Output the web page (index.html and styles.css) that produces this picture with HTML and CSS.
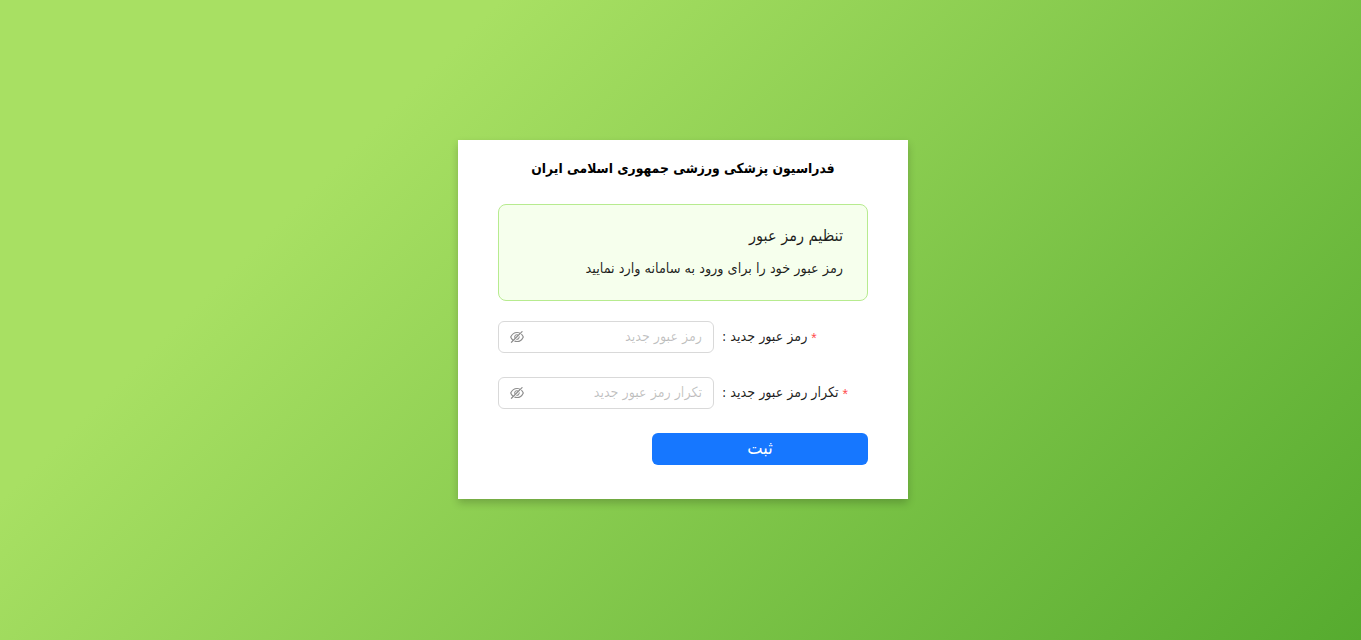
FILE: index.html
```html
<!DOCTYPE html>
<html lang="fa" dir="rtl">
<head>
<meta charset="utf-8">
<title>تنظیم رمز عبور</title>
<link rel="stylesheet" href="styles.css">
</head>
<body>
<main class="page">
  <section class="card">
    <h1 class="title">فدراسیون پزشکی ورزشی جمهوری اسلامی ایران</h1>
    <div class="alert">
      <div class="alert-title">تنظیم رمز عبور</div>
      <div class="alert-text">رمز عبور خود را برای ورود به سامانه وارد نمایید</div>
    </div>
    <form class="form">
      <div class="row">
        <label class="label"><span class="star">*</span>رمز عبور جدید :</label>
        <div class="input">
          <span class="placeholder">رمز عبور جدید</span>
          <svg class="eye" viewBox="64 64 896 896" fill="currentColor" aria-hidden="true"><path d="M942.2 486.2Q889.47 375.11 816.7 305l-50.88 50.88C807.31 395.53 843.45 447.4 874.7 512 791.5 684.2 673.4 766 512 766q-72.67 0-133.87-22.38L323 798.75Q408 838 512 838q288.3 0 430.2-300.3a60.29 60.29 0 000-51.5zm-63.57-320.64L836 122.88a8 8 0 00-11.32 0L715.31 232.2Q624.86 186 512 186q-288.3 0-430.2 300.3a60.3 60.3 0 000 51.5q56.69 119.4 136.5 191.41L112.48 835a8 8 0 000 11.31L155.17 889a8 8 0 0011.31 0l712.15-712.12a8 8 0 000-11.32zM149.3 512C232.6 339.8 350.7 258 512 258c54.54 0 104.13 9.36 149.12 28.39l-70.3 70.3a176 176 0 00-238.13 238.13l-83.42 83.42C223.1 637.49 183.3 582.28 149.3 512zm246.7 0a112.11 112.11 0 01146.2-106.69L401.31 546.2A112 112 0 01396 512z"/><path d="M508 624c-3.46 0-6.87-.16-10.25-.47l-52.82 52.82a176.09 176.09 0 00227.42-227.42l-52.82 52.82c.31 3.38.47 6.79.47 10.25a111.94 111.94 0 01-112 112z"/></svg>
        </div>
      </div>
      <div class="row">
        <label class="label"><span class="star">*</span>تکرار رمز عبور جدید :</label>
        <div class="input">
          <span class="placeholder">تکرار رمز عبور جدید</span>
          <svg class="eye" viewBox="64 64 896 896" fill="currentColor" aria-hidden="true"><path d="M942.2 486.2Q889.47 375.11 816.7 305l-50.88 50.88C807.31 395.53 843.45 447.4 874.7 512 791.5 684.2 673.4 766 512 766q-72.67 0-133.87-22.38L323 798.75Q408 838 512 838q288.3 0 430.2-300.3a60.29 60.29 0 000-51.5zm-63.57-320.64L836 122.88a8 8 0 00-11.32 0L715.31 232.2Q624.86 186 512 186q-288.3 0-430.2 300.3a60.3 60.3 0 000 51.5q56.69 119.4 136.5 191.41L112.48 835a8 8 0 000 11.31L155.17 889a8 8 0 0011.31 0l712.15-712.12a8 8 0 000-11.32zM149.3 512C232.6 339.8 350.7 258 512 258c54.54 0 104.13 9.36 149.12 28.39l-70.3 70.3a176 176 0 00-238.13 238.13l-83.42 83.42C223.1 637.49 183.3 582.28 149.3 512zm246.7 0a112.11 112.11 0 01146.2-106.69L401.31 546.2A112 112 0 01396 512z"/><path d="M508 624c-3.46 0-6.87-.16-10.25-.47l-52.82 52.82a176.09 176.09 0 00227.42-227.42l-52.82 52.82c.31 3.38.47 6.79.47 10.25a111.94 111.94 0 01-112 112z"/></svg>
        </div>
      </div>
      <div class="row actions">
        <button type="button" class="submit">ثبت</button>
      </div>
    </form>
  </section>
</main>
</body>
</html>
```
FILE: styles.css
```css
* { box-sizing: border-box; }
html, body { margin: 0; height: 100%; }
body {
  font-family: "DejaVu Sans Condensed", "DejaVu Sans", sans-serif;
  font-stretch: condensed;
  font-size: 14.3px;
  color: rgba(0, 0, 0, 0.88);
}
.page {
  height: 640px;
  display: flex;
  align-items: center;
  justify-content: center;
  padding: 0 0 1px 5px;
  background: linear-gradient(135deg, #a8e063 25%, #56ab2f 100%);
}
.card {
  width: 450px;
  height: 359px;
  padding: 16px 40px 0;
  background: #fff;
  box-shadow: 0 4px 8px rgba(0, 0, 0, 0.2);
}
.title {
  margin: 0 0 28px;
  font-size: 13.75px;
  line-height: 25px;
  font-weight: 700;
  text-align: center;
  color: #000;
  height: 20px;
}
.alert {
  height: 97px;
  padding: 19px 24px 0;
  background: #f6ffed;
  border: 1px solid #b7eb8f;
  border-radius: 8px;
}
.alert-title {
  font-size: 16.15px;
  line-height: 24px;
  margin-bottom: 9px;
}
.alert-text { line-height: 22px; }
.form {
  margin-top: 20px;
  display: flex;
  flex-direction: column;
  gap: 24px;
}
.row {
  display: grid;
  grid-template-columns: 154px 216px;
  align-items: center;
  height: 32px;
}
.label {
  padding: 0 0 0 8px;
  font-size: 14.15px;
  text-align: left;
  white-space: nowrap;
}
.star {
  margin-left: 4px;
  color: #ff4d4f;
  font-family: "Liberation Sans", sans-serif;
  font-size: 14px;
  vertical-align: -2px;
}
.input {
  height: 32px;
  padding: 0 11px;
  display: flex;
  align-items: center;
  justify-content: space-between;
  border: 1px solid #d9d9d9;
  border-radius: 6px;
  background: #fff;
}
.placeholder { padding-bottom: 2px; font-size: 14.15px; color: rgba(0, 0, 0, 0.25); }
.eye { width: 14px; height: 14px; color: rgba(0, 0, 0, 0.45); flex: none; }
.actions { grid-template-columns: 216px; justify-content: start; }
.submit {
  height: 32px;
  width: 216px;
  padding: 0 0 3px;
  border: 0;
  border-radius: 6px;
  background: #1677ff;
  color: #fff;
  font: 18px "DejaVu Sans Condensed", "DejaVu Sans", sans-serif;
  font-stretch: condensed;
}
```
